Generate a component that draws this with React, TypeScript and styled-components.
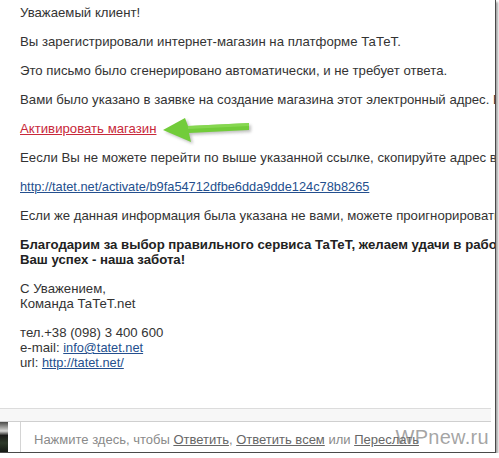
import React from "react";
import styled, { createGlobalStyle } from "styled-components";

const Global = createGlobalStyle`
  html, body { margin: 0; padding: 0; background: #fff; }
  body { font-family: "Liberation Sans", Arial, sans-serif; }
`;

const Frame = styled.div`
  position: relative;
  width: 495px;
  height: 452px;
  border-right: 1px solid #4a4a4a;
  border-bottom: 1px solid #4a4a4a;
  box-shadow: 2px 2px 2px rgba(0, 0, 0, 0.35);
  overflow: hidden;
  background: #fff;
  display: flex;
  flex-direction: column;
`;

const Body = styled.div`
  padding: 5px 0 0 20px;
  color: #333;
  font-size: 13.2px;
  line-height: 15px;
  white-space: nowrap;
  flex: 1;
`;

const P = styled.p<{ $bold?: boolean }>`
  margin: 0 0 14px;
  font-weight: ${(p) => (p.$bold ? "bold" : "normal")};
  color: ${(p) => (p.$bold ? "#222" : "#333")};
`;

const LinkRow = styled.p`
  position: relative;
  margin: 0 0 14px;
`;

const A = styled.a<{ $tone: "red" | "blue" | "grey" }>`
  color: ${(p) => (p.$tone === "red" ? "#c8283a" : p.$tone === "blue" ? "#244f8e" : "#666")};
  font-size: ${(p) => (p.$tone === "blue" ? "12.8px" : "inherit")};
  text-decoration: underline;
`;

const Arrow = styled.svg`
  position: absolute;
  left: 141px;
  top: -10px;
`;

const Divider = styled.div`
  height: 12px;
  border-top: 1px solid #dcdcdc;
  border-bottom: 1px solid #cfcfcf;
  background: #f7f7f7;
  margin-right: 4px;
`;

const ReplyRow = styled.div`
  display: flex;
  height: 30px;
  align-items: stretch;
  gap: 12px;
  margin-right: 4px;
`;

const Thumb = styled.div`
  width: 8px;
  background: linear-gradient(180deg, #4a4a48 0%, #d8d8d6 30%, #1c1c1a 45%, #2e3a2a 70%, #151915 100%);
`;

const ReplyBox = styled.div`
  flex: 1;
  border-left: 1px solid #d4d4d4;
  display: flex;
  align-items: center;
  padding: 4px 0 0 13px;
  color: #8a8a8a;
  font-size: 13px;
  white-space: nowrap;
`;

const Watermark = styled.div`
  position: absolute;
  right: 6px;
  bottom: 3px;
  font-family: "Liberation Sans", Arial, sans-serif;
  font-size: 20px;
  color: rgba(125, 125, 125, 0.7);
  letter-spacing: 0.3px;
`;

export default function App() {
  return (
    <>
      <Global />
      <Frame>
        <Body>
          <P>Уважаемый клиент!</P>
          <P>Вы зарегистрировали интернет-магазин на платформе ТаТеТ.</P>
          <P>Это письмо было сгенерировано автоматически, и не требует ответа.</P>
          <P>Вами было указано в заявке на создание магазина этот электронный адрес. Если это так, то</P>
          <LinkRow>
            <A $tone="red" href="#">Активировать магазин</A>
            <Arrow width="96" height="36" viewBox="0 0 96 36">
              <defs>
                <filter id="sh" x="-20%" y="-40%" width="140%" height="180%">
                  <feGaussianBlur stdDeviation="1.6" />
                </filter>
              </defs>
              <path
                d="M2 19 L24 7 L27 15 L88 12 L88 19 L28 22 L30 31 Z"
                fill="#777"
                opacity="0.45"
                transform="translate(2 2)"
                filter="url(#sh)"
              />
              <path d="M2 19 L24 7 L27 15 L88 12 L88 19 L28 22 L30 31 Z" fill="#72cc3a" />
              <path d="M27 15 L88 12 L88 15 L27 18 Z" fill="#8fdc5a" opacity="0.7" />
            </Arrow>
          </LinkRow>
          <P>Еесли Вы не можете перейти по выше указанной ссылке, скопируйте адрес в адресную строку</P>
          <P>
            <A $tone="blue" href="#">http://tatet.net/activate/b9fa54712dfbe6dda9dde124c78b8265</A>
          </P>
          <P>Если же данная информация была указана не вами, можете проигнорировать это письмо.</P>
          <P $bold>
            Благодарим за выбор правильного сервиса ТаТеТ, желаем удачи в работе!
            <br />
            Ваш успех - наша забота!
          </P>
          <P>
            С Уважением,
            <br />
            Команда ТаТеТ.net
          </P>
          <P>
            тел.+38 (098) 3 400 600
            <br />
            e-mail: <A $tone="blue" href="#">info@tatet.net</A>
            <br />
            url: <A $tone="blue" href="#">http://tatet.net/</A>
          </P>
        </Body>
        <Divider />
        <ReplyRow>
          <Thumb />
          <ReplyBox>
            Нажмите здесь, чтобы&nbsp;<A $tone="grey" href="#">Ответить</A>,&nbsp;
            <A $tone="grey" href="#">Ответить всем</A>&nbsp;или&nbsp;
            <A $tone="grey" href="#">Переслать</A>
          </ReplyBox>
        </ReplyRow>
        <Watermark>WPnew.ru</Watermark>
      </Frame>
    </>
  );
}
